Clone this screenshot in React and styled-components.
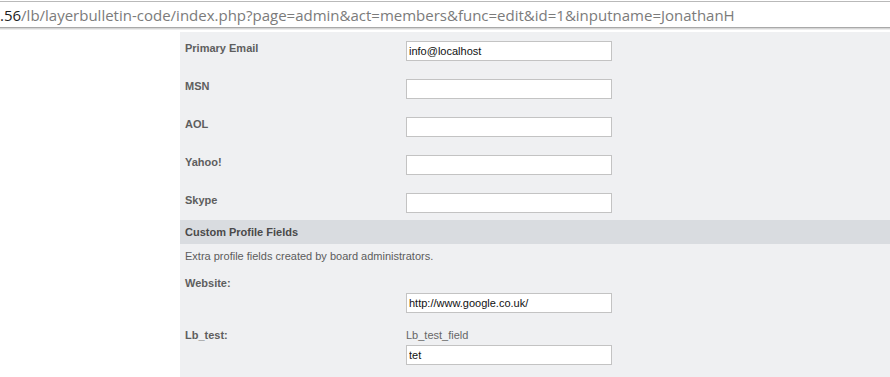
import React from 'react';
import styled, { createGlobalStyle } from 'styled-components';

const GlobalStyle = createGlobalStyle`
  html, body {
    margin: 0;
    padding: 0;
    background: #fff;
  }
  body {
    font-family: "Liberation Sans", Arial, sans-serif;
    overflow: hidden;
  }
`;

const contactFields = [
  { label: 'Primary Email', value: 'info@localhost' },
  { label: 'MSN', value: '' },
  { label: 'AOL', value: '' },
  { label: 'Yahoo!', value: '' },
  { label: 'Skype', value: '' },
];

const customFields = [
  { label: 'Website:', note: '', value: 'http://www.google.co.uk/' },
  { label: 'Lb_test:', note: 'Lb_test_field', value: 'tet' },
];

const App = () => {
  return (
    <>
      <GlobalStyle />
      <Page>
        <AddressBar>
          <Host>.56</Host>
          <Path>/lb/layerbulletin-code/index.php?page=admin&amp;act=members&amp;func=edit&amp;id=1&amp;inputname=JonathanH</Path>
        </AddressBar>
        <Body>
          <Gutter />
          <Panel>
            <ContactList>
              {contactFields.map((f) => (
                <FieldRow key={f.label}>
                  <Label>{f.label}</Label>
                  <TextInput type="text" defaultValue={f.value} />
                </FieldRow>
              ))}
            </ContactList>
            <SectionHeader>Custom Profile Fields</SectionHeader>
            <SectionNote>Extra profile fields created by board administrators.</SectionNote>
            <CustomList>
              {customFields.map((f) => (
                <FieldRow key={f.label}>
                  <Label>{f.label}</Label>
                  <FieldStack>
                    <FieldNote>{f.note}</FieldNote>
                    <TextInput type="text" defaultValue={f.value} />
                  </FieldStack>
                </FieldRow>
              ))}
            </CustomList>
          </Panel>
        </Body>
      </Page>
    </>
  );
};

export default App;

const Page = styled.div`
  display: flex;
  flex-direction: column;
  width: 890px;
  height: 377px;
  overflow: hidden;
`;

const AddressBar = styled.div`
  display: flex;
  align-items: center;
  height: 25px;
  margin-top: 1px;
  border-top: 1px solid #b9b9b9;
  border-bottom: 1px solid #a9a9a9;
  box-shadow: 0 1px 0 #d6d6d6, 0 2px 0 #ececec;
  font-family: "Open Sans", "Noto Sans", sans-serif;
  font-size: 15px;
  white-space: nowrap;
  overflow: hidden;
`;

const Host = styled.span`
  color: #1e1e1e;
`;

const Path = styled.span`
  color: #7b7b7b;
`;

const Body = styled.div`
  display: flex;
  flex: 1;
  margin-top: 4px;
`;

const Gutter = styled.div`
  width: 180px;
  flex-shrink: 0;
  background: #fff;
`;

const Panel = styled.div`
  flex: 1;
  display: flex;
  flex-direction: column;
  background: #eff0f2;
  padding-top: 9px;
`;

const ContactList = styled.div`
  display: flex;
  flex-direction: column;
  gap: 18px;
  margin-bottom: 7px;
`;

const FieldRow = styled.div`
  display: grid;
  grid-template-columns: 226px 206px;
  align-items: start;
`;

const Label = styled.div`
  padding-left: 5px;
  font-size: 11px;
  line-height: 14px;
  font-weight: bold;
  color: #5e5e5e;
`;

const TextInput = styled.input`
  box-sizing: border-box;
  width: 206px;
  height: 20px;
  margin: 0;
  padding: 0 2px;
  border: 1px solid #c3c3c3;
  background: #fff;
  font-family: "Liberation Sans", Arial, sans-serif;
  font-size: 11px;
  color: #111;
  outline: none;
`;

const SectionHeader = styled.div`
  height: 24px;
  display: flex;
  align-items: center;
  padding-left: 5px;
  background: #d9dce0;
  font-size: 11px;
  font-weight: bold;
  color: #4a4a4a;
`;

const SectionNote = styled.div`
  padding: 5px 0 0 5px;
  font-size: 11px;
  line-height: 14px;
  color: #5c5c5c;
`;

const CustomList = styled.div`
  display: flex;
  flex-direction: column;
  gap: 15px;
  margin-top: 13px;
`;

const FieldStack = styled.div`
  display: flex;
  flex-direction: column;
`;

const FieldNote = styled.div`
  min-height: 14px;
  margin-bottom: 3px;
  font-size: 11px;
  line-height: 14px;
  color: #666;
`;
